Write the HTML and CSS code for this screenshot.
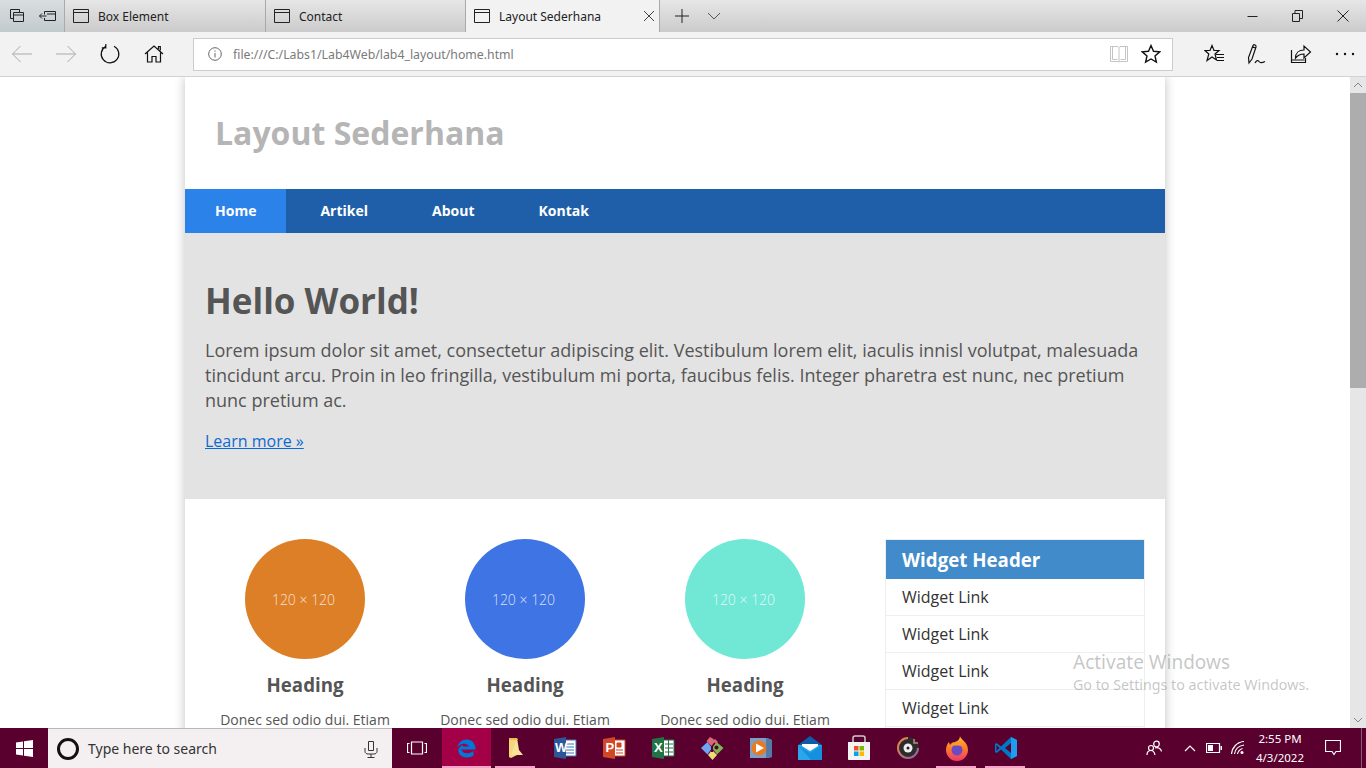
FILE: index.html
```html
<!DOCTYPE html>
<html lang="en">
<head>
  <meta charset="UTF-8">
  <meta name="viewport" content="width=device-width, initial-scale=1.0">
  <title>Layout Sederhana</title>
  <link rel="stylesheet" href="styles.css">
</head>
<body>
  <div class="tabbar">
    <div class="tab-tools">
      <span class="tool-btn"><svg width="16" height="16" viewBox="0 0 16 16"><path class="line" d="M1.5 1.5h9v3M1.5 1.5v9h3M4.5 4.5h10v9h-10zM4.5 7h10"/></svg></span>
      <span class="tool-btn"><svg width="18" height="16" viewBox="0 0 18 16"><path class="line" d="M5.5 3.5h11v9h-11v-2.500M5.500 3.500v3M.5 8h7M3 5.500L.5 8 3 10.500M8 6h8.500"/></svg></span>
    </div>
    <div class="tab">
      <svg class="tab-ico" width="16" height="14" viewBox="0 0 16 14"><path class="line" d="M.5.5h15v13H.5zM.5 3.500h15"/></svg>
      <span>Box Element</span>
    </div>
    <div class="tab">
      <svg class="tab-ico" width="16" height="14" viewBox="0 0 16 14"><path class="line" d="M.5.5h15v13H.5zM.5 3.500h15"/></svg>
      <span>Contact</span>
    </div>
    <div class="tab tab-active">
      <svg class="tab-ico" width="16" height="14" viewBox="0 0 16 14"><path class="line" d="M.5.5h15v13H.5zM.5 3.500h15"/></svg>
      <span>Layout Sederhana</span>
      <svg class="tab-close" width="12" height="12" viewBox="0 0 12 12"><path class="line" d="M1 1l10 10M11 1L1 11"/></svg>
    </div>
    <span class="tab-new"><svg width="16" height="16" viewBox="0 0 16 16"><path class="line" d="M8 1v14M1 8h14"/></svg></span>
    <span class="tab-list"><svg width="14" height="8" viewBox="0 0 14 8"><path class="line" d="M1 1l6 6 6-6"/></svg></span>
    <div class="win-btns">
      <span class="win-btn"><svg width="11" height="11" viewBox="0 0 11 11"><path class="line" d="M.5 5.500h10"/></svg></span>
      <span class="win-btn"><svg width="11" height="12" viewBox="0 0 11 12"><path class="line" d="M.5 3.500h7v8h-7zM3 3.500V.5h7.500v8H7.500"/></svg></span>
      <span class="win-btn"><svg width="12" height="12" viewBox="0 0 12 12"><path class="line" d="M.5.5l11 11M11.500.5l-11 11"/></svg></span>
    </div>
  </div>

  <div class="toolbar">
    <span class="bar-btn muted"><svg width="22" height="18" viewBox="0 0 22 18"><path class="line" d="M21 9H1.500M9.500 1L1.500 9l8 8"/></svg></span>
    <span class="bar-btn muted"><svg width="22" height="18" viewBox="0 0 22 18"><path class="line" d="M1 9h19.500M12.500 1l8 8-8 8"/></svg></span>
    <span class="bar-btn"><svg width="22" height="22" viewBox="0 0 22 22"><path class="line mid" d="M6.500 3.500a8.800 8.800 0 1 0 8.500-.300M6.800 1v3.800H2.800"/></svg></span>
    <span class="bar-btn"><svg width="20" height="20" viewBox="0 0 20 20"><path class="line mid" d="M1 10L10 2l9 8M3.500 8.500V18h4.500v-5.500h4V18h4.500V8.500M14.500 5V2.500h1.800v4"/></svg></span>
    <div class="address">
      <svg class="info" width="14" height="14" viewBox="0 0 14 14"><circle class="line" cx="7" cy="7" r="6.300"/><path class="line" d="M7 6v4.500M7 3.500v1.200"/></svg>
      <span class="url">file:///C:/Labs1/Lab4Web/lab4_layout/home.html</span>
      <svg class="reading" width="20" height="18" viewBox="0 0 20 18"><path class="line" d="M1.500 1.500h7.500l1 1 1-1h7.500v15h-7.500l-1 .5-1-.5H1.500zM10 2.500v14M3.500 1.500v13h5M16.500 1.500v13h-5"/></svg>
      <svg class="star" width="20" height="20" viewBox="0 0 20 20"><path class="line heavy" d="M10 1.500l2.500 5.800 6.200.6-4.700 4.100 1.400 6.100L10 15l-5.400 3.100L6 12 1.300 7.900l6.200-.6z"/></svg>
    </div>
    <div class="bar-right">
      <span class="bar-btn"><svg class="hub" width="22" height="20" viewBox="0 0 22 20"><path class="line mid" d="M8 1.500l2 5h5l-4 3.500 1.500 6-4.500-3-5 3.500 1.800-6.500L1 6.500h5zM12 10.500h8M13 13.500h7M13 16.500h7"/></svg></span>
      <span class="bar-btn"><svg width="20" height="22" viewBox="0 0 20 22"><path class="line mid" d="M2 20l-.5-5.500L6 2.500c1-1.500 3.500-.5 3 1.500L5 16zM2 20l3-4M5.500 3.800l3 1.200M8 20c1.500-3 3-3 4-1.500s3 1.500 6 0"/></svg></span>
      <span class="bar-btn"><svg width="22" height="20" viewBox="0 0 22 20"><path class="line mid" d="M1.500 6v12.500h14V14M1.500 16h13M5.500 14c0-5 3.500-8 8.500-8V2l6.500 6-6.500 6v-4c-3.500 0-6 1-8.500 4z"/></svg></span>
      <span class="bar-btn"><svg width="20" height="4" viewBox="0 0 20 4"><circle class="dot" cx="2" cy="2" r="1.200"/><circle class="dot" cx="10" cy="2" r="1.200"/><circle class="dot" cx="18" cy="2" r="1.200"/></svg></span>
    </div>
  </div>

  <div class="viewport">
    <div class="page-area">
      <div class="container">
        <header class="site-header">
          <h1>Layout Sederhana</h1>
        </header>
        <nav class="site-nav">
          <a class="active" href="#">Home</a>
          <a href="#">Artikel</a>
          <a href="#">About</a>
          <a href="#">Kontak</a>
        </nav>
        <section class="hero">
          <h1>Hello World!</h1>
          <p>Lorem ipsum dolor sit amet, consectetur adipiscing elit. Vestibulum lorem elit, iaculis innisl volutpat, malesuada tincidunt arcu. Proin in leo fringilla, vestibulum mi porta, faucibus felis. Integer pharetra est nunc, nec pretium nunc pretium ac.</p>
          <a class="more" href="#">Learn more »</a>
        </section>
        <div class="content">
          <div class="main">
            <div class="col">
              <div class="thumb orange">120 × 120</div>
              <h2>Heading</h2>
              <p>Donec sed odio dui. Etiam porta sem malesuada magna mollis euismod.</p>
            </div>
            <div class="col">
              <div class="thumb blue">120 × 120</div>
              <h2>Heading</h2>
              <p>Donec sed odio dui. Etiam porta sem malesuada magna mollis euismod.</p>
            </div>
            <div class="col">
              <div class="thumb aqua">120 × 120</div>
              <h2>Heading</h2>
              <p>Donec sed odio dui. Etiam porta sem malesuada magna mollis euismod.</p>
            </div>
          </div>
          <aside class="widget">
            <h3>Widget Header</h3>
            <ul>
              <li><a href="#">Widget Link</a></li>
              <li><a href="#">Widget Link</a></li>
              <li><a href="#">Widget Link</a></li>
              <li><a href="#">Widget Link</a></li>
              <li><a href="#">Widget Link</a></li>
            </ul>
          </aside>
        </div>
      </div>
    </div>
    <div class="scrollbar">
      <span class="sb-btn"><svg width="10" height="6" viewBox="0 0 10 6"><path class="line" d="M1 5l4-4 4 4"/></svg></span>
      <span class="sb-thumb"></span>
      <span class="sb-track"></span>
      <span class="sb-btn"><svg width="10" height="6" viewBox="0 0 10 6"><path class="line" d="M1 1l4 4 4-4"/></svg></span>
    </div>
    <div class="watermark">
      <div class="wm-big">Activate Windows</div>
      <div class="wm-small">Go to Settings to activate Windows.</div>
    </div>
  </div>

  <div class="taskbar">
    <span class="start"><svg width="17" height="17" viewBox="0 0 17 17"><path class="white" d="M0 2.500l7-1v6.500H0zM8 1.300L17 0v8H8zM0 9h7v6.500l-7-1zM8 9h9v8l-9-1.300z"/></svg></span>
    <div class="search">
      <svg class="cortana" width="24" height="24" viewBox="0 0 24 24"><circle cx="12" cy="12" r="9.500" fill="none" stroke="#111" stroke-width="3"/></svg>
      <span class="search-text">Type here to search</span>
      <svg class="mic" width="14" height="18" viewBox="0 0 14 18"><path class="line" d="M4.500 1.500h5v9h-5zM1 8v3.500c0 1.500 1.500 2.500 3 2.500h6c1.500 0 3-1 3-2.500V8M7 14v3M3.500 17.500h7"/></svg>
    </div>
    <span class="taskview"><svg width="20" height="14" viewBox="0 0 20 14"><path class="line-w" d="M4.500 1h11v12h-11zM2.500 2.500H.5v9h2M17.500 2.500h2v9h-2"/></svg></span>
    <div class="apps">
      <span class="app app-current on">
        <svg width="24" height="24" viewBox="0 0 24 24"><path d="M3.500 13.500h17c.3-6-3.500-10-9-10-4.500 0-8 3.500-9.500 8 2-2.500 5-4.200 8-3.800 2 .3 3.500 1.500 3.800 2.800H8C8.500 8 5 9.500 3.500 13.500z" fill="#0078d7"/><path d="M3.500 12.500c-1 5.500 3 9 8 9 3 0 5.500-.8 7-2v-4.500c-2 1.500-4.500 2.300-7 2.300-2.500 0-4.200-1-4.500-3.300z" fill="#0078d7"/></svg>
      </span>
      <span class="app on">
        <svg width="16" height="24" viewBox="0 0 16 24"><path d="M1 2h8v17l-6 3-2-1z" fill="#f6d77c"/><path d="M9 2l2 12 4 5H3z" fill="#fbe29c"/><path d="M1 2h8l1 2H1z" fill="#e9bf55"/></svg>
      </span>
      <span class="app">
        <svg width="24" height="24" viewBox="0 0 24 24"><path d="M10 4h13v16H10z" fill="#fff" stroke="#3c74b8"/><path d="M13 8h8M13 11h8M13 14h8M13 17h8" stroke="#3c74b8"/><path d="M1 3l12-2v22L1 21z" fill="#2b579a"/><text class="app-letter" x="2" y="16">W</text></svg>
      </span>
      <span class="app">
        <svg width="24" height="24" viewBox="0 0 24 24"><path d="M10 4h13v16H10z" fill="#fff" stroke="#d24726"/><path d="M15 7h4v4h-4zM14 14h7M14 17h7" fill="#d24726" stroke="#d24726"/><path d="M1 3l12-2v22L1 21z" fill="#d24726"/><text class="app-letter" x="3.500" y="16">P</text></svg>
      </span>
      <span class="app">
        <svg width="24" height="24" viewBox="0 0 24 24"><path d="M10 4h13v16H10z" fill="#fff" stroke="#217346"/><path d="M14 8h8M14 12h8M14 16h8M17.500 4v16" stroke="#217346"/><path d="M1 3l12-2v22L1 21z" fill="#217346"/><text class="app-letter" x="3" y="16">X</text></svg>
      </span>
      <span class="app">
        <svg width="24" height="24" viewBox="0 0 24 24"><path d="M7.500 6L1 12l6.500 6.500L12 12z" fill="#6ea6f5"/><path d="M16.500 6L12 12l5 6.500L23.500 12z" fill="#7fb653"/><path d="M12 14l-4 5 4.500 5 4.500-5z" fill="#ecdc7b"/><path d="M10 1L6.500 5l5 5 3-4-1-3zM15 3l-2 2 3 3 2-2z" fill="#d96a78"/><circle cx="16.500" cy="11.500" r="2" fill="#5a002e"/><path d="M12 10v6" stroke="#5a002e" stroke-width="2"/></svg>
      </span>
      <span class="app">
        <svg width="24" height="24" viewBox="0 0 24 24"><path d="M1 2l17 0 5 2v17l-5 1H1z" fill="#7b9fc8"/><path d="M17 2h1l5 2v17l-5 1h-1z" fill="#547aa8"/><circle cx="10" cy="12" r="7.500" fill="#ea7a1f"/><path d="M7 7.500l8 4.500-8 4.500z" fill="#fff"/></svg>
      </span>
      <span class="app">
        <svg width="26" height="26" viewBox="0 0 26 26"><path d="M1 10L13 1l12 9v3H1z" fill="#0a5ea8"/><path d="M1 10h24v15H1z" fill="#28a8ea"/><path d="M5 9h16v2l-8 5-8-5z" fill="#fff"/><path d="M1 10l12 8 12-8v15H14z" fill="#1490df"/></svg>
      </span>
      <span class="app">
        <svg width="24" height="26" viewBox="0 0 24 26"><path class="bag-handle" d="M6 8V3c0-1 .5-2 2-2h8c1.500 0 2 1 2 2v5"/><path d="M1 7h22v17c0 .6-.4 1-1 1H2c-.6 0-1-.4-1-1z" fill="#f3f3f3"/><path d="M7 11h4.500v4.500H7z" fill="#f25022"/><path d="M12.500 11H17v4.500h-4.500z" fill="#7fba00"/><path d="M7 16.500h4.500V21H7z" fill="#00a4ef"/><path d="M12.500 16.500H17V21h-4.500z" fill="#ffb900"/></svg>
      </span>
      <span class="app">
        <svg width="24" height="24" viewBox="0 0 24 24"><circle cx="12" cy="12" r="11" fill="#2c2c2c"/><path d="M12 2a10 10 0 1 0 10 10" fill="none" stroke="url(#ring)" stroke-width="2"/><path d="M18 3v4h4" fill="none" stroke="#b98a78" stroke-width="1.500"/><circle cx="12" cy="12" r="4.500" fill="#eee"/><circle cx="12" cy="12" r="1.500" fill="#222"/><defs><linearGradient id="ring" x1="0" y1="0" x2="1" y2="1"><stop offset="0" stop-color="#f08a3c"/><stop offset="1" stop-color="#8a5ea8"/></linearGradient></defs></svg>
      </span>
      <span class="app on">
        <svg width="24" height="26" viewBox="0 0 24 26"><defs><linearGradient id="fox" x1="0" y1="0" x2="0" y2="1"><stop offset="0" stop-color="#ffbd2e"/><stop offset=".5" stop-color="#ff7a2a"/><stop offset="1" stop-color="#f0386b"/></linearGradient></defs><path d="M15 1c0 3 8 6 8 14a11 11 0 0 1-22 0c0-3 1-6 3-8l1 3c1-2 3-3 5-3 3-1 5-3 5-6z" fill="url(#fox)"/><circle cx="12" cy="15" r="5.500" fill="#6a4bc4"/><path d="M7 10c3-2 7-2 9 1-3-1-6 0-9-1z" fill="#ff9a2e"/></svg>
      </span>
      <span class="app on">
        <svg width="24" height="24" viewBox="0 0 24 24"><path d="M17 1l6 3v16l-6 3-10-9.500L2.500 17 1 16v-8l1.500-1L7 10.500z" fill="#0078c8"/><path d="M17 1l6 3v16l-6 3z" fill="#1f9cf0"/><path d="M17 7l-6 5 6 5z" fill="#5a002e"/><path d="M2.500 9l3 3-3 3z" fill="#5a002e"/></svg>
      </span>
    </div>
    <div class="tray">
      <span class="tray-ico people"><svg width="16" height="16" viewBox="0 0 16 16"><circle class="line-w" cx="10.500" cy="4" r="2.800"/><circle class="line-w" cx="5" cy="8" r="2.500"/><path class="line-w" d="M1 15c0-2.500 1.500-4.500 4-4.500s3.500 2 4 4.500M9 8c3-1 6 .5 6.500 3.500"/></svg></span>
      <span class="tray-ico caret"><svg width="12" height="7" viewBox="0 0 12 7"><path class="line-w" d="M1 6l5-5 5 5"/></svg></span>
      <span class="tray-ico battery"><svg width="16" height="10" viewBox="0 0 16 10"><path class="line-w" d="M.5.5h13v9H.5z"/><path class="white" d="M2 2h5v6H2zM14.500 3H16v4h-1.500z"/></svg></span>
      <span class="tray-ico wifi"><svg width="14" height="14" viewBox="0 0 14 14"><path class="line-w" d="M.5 13C1 6.500 6 1 13 .5M3.500 13c.5-4.500 4-8 9.500-9M6.500 13c.5-2.500 2-4.500 5-5.500"/><circle class="white" cx="11" cy="11.500" r="1.500"/></svg></span>
      <div class="clock">
        <div>2:55 PM</div>
        <div>4/3/2022</div>
      </div>
      <span class="notify"><svg width="16" height="16" viewBox="0 0 16 16"><path class="line-w" d="M.5.500h15v11h-4.500l-2 3-2-3H.5z"/></svg></span>
      <span class="show-desktop"></span>
    </div>
  </div>
</body>
</html>
```

FILE: styles.css
```css
* {
  box-sizing: border-box;
}
html, body {
  margin: 0;
  height: 100%;
}
body {
  display: flex;
  flex-direction: column;
  width: 1366px;
  height: 768px;
  overflow: hidden;
  font-family: "Open Sans", sans-serif;
  color: #555;
  background: #fff;
}
svg {
  display: block;
}
.line {
  fill: none;
  stroke: currentColor;
  stroke-width: 1;
}
.mid {
  stroke-width: 1.2;
}
.heavy {
  stroke-width: 1.4;
}
.dot {
  fill: currentColor;
}
.line-w {
  fill: none;
  stroke: #fff;
  stroke-width: 1.2;
}
.white {
  fill: #fff;
}

/* tabs */
.tabbar {
  display: flex;
  align-items: stretch;
  height: 32px;
  color: #222;
  font-family: "Noto Sans", sans-serif;
  font-size: 12px;
  background: linear-gradient(to bottom, #e6e6e6, #cbcbcb);
}
.tab-tools {
  display: flex;
  width: 65px;
  padding-left: 1px;
  border-right: 1px solid #aaa;
  background: linear-gradient(to bottom, #d8dde0, #c3cacd);
}
.tool-btn {
  display: flex;
  align-items: center;
  justify-content: center;
  width: 31px;
}
.tab {
  display: flex;
  align-items: center;
  width: 201px;
  padding-left: 8px;
  border-right: 1px solid #aaa;
}
.tab:nth-child(3) {
  width: 200px;
}
.tab-ico {
  margin-right: 9px;
}
.tab-active {
  width: 194px;
  background: #f2f2f2;
}
.tab-close {
  margin-left: auto;
  margin-right: 4px;
  color: #444;
}
.tab-new {
  display: flex;
  align-items: center;
  justify-content: center;
  width: 44px;
}
.tab-list {
  display: flex;
  align-items: center;
  justify-content: center;
  width: 20px;
  margin-left: 0;
  color: #555;
}
.win-btns {
  display: flex;
  margin-left: auto;
  padding-right: 1px;
}
.win-btn {
  display: flex;
  align-items: center;
  justify-content: center;
  width: 45px;
}

/* toolbar */
.toolbar {
  display: flex;
  align-items: center;
  height: 45px;
  overflow: hidden;
  color: #111;
  background: #f2f2f2;
  border-bottom: 1px solid #d2d2d2;
}
.bar-btn {
  display: flex;
  flex: none;
  align-items: center;
  justify-content: center;
  width: 44px;
  height: 44px;
}
.hub {
  margin-left: 3px;
}
.muted {
  color: #aaa;
}
.address {
  display: flex;
  align-items: center;
  flex: 0 0 980px;
  height: 33px;
  margin-left: 17px;
  padding: 0 11px 0 14px;
  background: #fff;
  border: 1px solid #ccc;
}
.info {
  color: #666;
  margin-right: 11px;
}
.url {
  color: #7a7a7a;
  font-family: "Noto Sans", sans-serif;
  font-size: 12.300px;
}
.reading {
  margin-left: auto;
  margin-right: 12px;
  color: #c4c4c4;
}
.bar-right {
  display: flex;
  flex: none;
  margin-left: 18px;
}

/* page */
.viewport {
  position: relative;
  display: flex;
  flex: 1;
  min-height: 0;
  overflow: hidden;
}
.page-area {
  flex: 1;
  overflow: hidden;
}
.container {
  width: 980px;
  margin: 0 auto;
  background: #fff;
  box-shadow: 0 0 10px rgba(0, 0, 0, 0.25);
}
.site-header {
  height: 112px;
  padding: 31px 30px 0;
}
.site-header h1 {
  margin: 0;
  font-size: 32px;
  line-height: 50px;
  color: #b5b5b5;
}
.site-nav {
  display: flex;
  gap: 4px;
  height: 44px;
  background: #1f5faa;
}
.site-nav a {
  padding: 0 30px;
  font-size: 14px;
  font-weight: bold;
  line-height: 44px;
  color: #fff;
  text-decoration: none;
}
.site-nav a.active {
  background: #2b83ea;
}
.hero {
  height: 266px;
  padding: 43px 20px 0;
  background: #e3e3e3;
}
.hero h1 {
  margin: 0 0 12px;
  font-size: 35px;
  line-height: 50px;
  color: #555;
}
.hero p {
  margin: 0 0 17px;
  font-size: 18px;
  line-height: 25px;
}
.more {
  font-size: 16px;
  line-height: 20px;
  color: #0d6ad1;
}
.content {
  display: flex;
  padding: 40px 20px 40px 10px;
}
.main {
  display: flex;
  flex: 1;
}
.col {
  width: 220px;
  padding: 0 25px;
  text-align: center;
}
.thumb {
  width: 120px;
  height: 120px;
  margin: 0 auto;
  padding-right: 3px;
  border-radius: 50%;
  font-size: 14px;
  font-weight: 300;
  line-height: 122px;
  color: rgba(255, 255, 255, 0.8);
}
.orange {
  background: #dd7f26;
}
.blue {
  background: #3f74e5;
}
.aqua {
  background: #70e8d5;
}
.col h2 {
  margin: 12px 0 11px;
  font-size: 18.720px;
  line-height: 28px;
}
.col p {
  margin: 0;
  font-size: 14px;
  line-height: 20px;
}
.widget {
  width: 260px;
  border: 1px solid #eee;
}
.widget h3 {
  margin: 0;
  padding: 0 16px;
  font-size: 18.720px;
  line-height: 39px;
  color: #fff;
  background: #428bca;
}
.widget ul {
  margin: 0;
  padding: 0;
  list-style: none;
}
.widget li {
  height: 37px;
  padding-left: 16px;
  border-bottom: 1px solid #eee;
}
.widget a {
  font-size: 16px;
  line-height: 36px;
  color: #333;
  text-decoration: none;
}

/* scrollbar */
.scrollbar {
  display: flex;
  flex-direction: column;
  width: 16px;
  background: #e6e6e6;
  color: #888;
}
.sb-btn {
  display: flex;
  align-items: center;
  justify-content: center;
  height: 16px;
}
.sb-thumb {
  height: 295px;
  background: #adadad;
}
.sb-track {
  flex: 1;
}

/* lies over the page */
.watermark {
  position: absolute;
  left: 1073px;
  top: 573px;
  font-family: "Noto Sans", sans-serif;
  color: rgba(90, 90, 90, 0.35);
  pointer-events: none;
}
.wm-big {
  font-size: 19px;
  line-height: 25px;
}
.wm-small {
  margin-top: -1px;
  font-size: 14.250px;
  line-height: 22px;
}

/* taskbar */
.taskbar {
  display: flex;
  height: 40px;
  background: #5a002e;
}
.start {
  display: flex;
  align-items: center;
  justify-content: center;
  width: 48px;
}
.search {
  display: flex;
  align-items: center;
  width: 344px;
  padding: 0 14px 0 8px;
  background: #f4f0f2;
  border-top: 1px solid #b8b8b8;
  color: #333;
}
.cortana {
  margin-right: 8px;
}
.search-text {
  font-family: "Noto Sans", sans-serif;
  font-size: 14px;
}
.mic {
  margin-left: auto;
}
.taskview {
  display: flex;
  align-items: center;
  justify-content: center;
  width: 50px;
}
.apps {
  display: flex;
}
.app {
  position: relative;
  display: flex;
  align-items: center;
  justify-content: center;
  width: 49px;
}
.app.on::after {
  content: "";
  position: absolute;
  left: 4px;
  right: 5px;
  bottom: 0;
  height: 2px;
  background: #f5a3c7;
}
.app-current {
  background: #a30047;
}
.app-current.on::after {
  left: 0;
  right: 0;
}
.app-letter {
  font-family: "Liberation Sans", sans-serif;
  font-size: 13px;
  font-weight: bold;
  fill: #fff;
}
.bag-handle {
  fill: none;
  stroke: #ccc;
  stroke-width: 1.500;
}
.tray {
  display: flex;
  flex: 1;
  align-items: center;
  justify-content: flex-end;
  color: #fff;
}
.tray-ico {
  display: flex;
  justify-content: center;
  width: 24px;
}
.people {
  margin-right: 12px;
}
.clock {
  width: 60px;
  margin: 0 11px 0 0;
  font-family: "Noto Sans", sans-serif;
  font-size: 11.500px;
  line-height: 19px;
  text-align: center;
}
.notify {
  display: flex;
  justify-content: center;
  width: 24px;
  margin-right: 16px;
}
.show-desktop {
  width: 1px;
  height: 40px;
  margin-right: 4px;
  background: #8a5a72;
}
```
